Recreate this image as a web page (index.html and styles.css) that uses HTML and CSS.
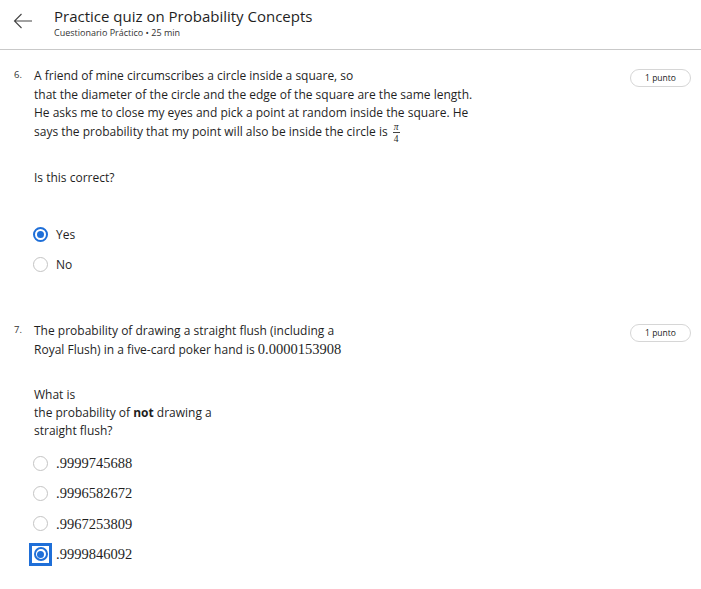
FILE: index.html
```html
<!DOCTYPE html>
<html lang="en">
<head>
<meta charset="utf-8">
<title>Practice quiz on Probability Concepts</title>
<link rel="stylesheet" href="styles.css">
</head>
<body>
<header class="header">
  <button class="back" aria-label="Back">
    <svg width="20" height="16" viewBox="0 0 20 16" fill="none" stroke="#444" stroke-width="1.1">
      <path d="M19 8H1.5M8.5 1L1.5 8l7 7"/>
    </svg>
  </button>
  <div class="titles">
    <h1 class="title">Practice quiz on Probability Concepts</h1>
    <div class="subtitle">Cuestionario Práctico • 25 min</div>
  </div>
</header>

<main class="content">
  <section class="question q6">
    <div class="q-head">
      <span class="q-num">6.</span>
      <div class="q-text">
        <p>A friend of mine circumscribes a circle inside a square, so<br>that the diameter of the circle and the edge of the square are the same length.<br>He asks me to close my eyes and pick a point at random inside the square. He<br>says the probability that my point will also be inside the circle is <span class="frac"><span class="num">π</span><span class="den">4</span></span></p>
        <p class="prompt">Is this correct?</p>
      </div>
      <span class="pill">1 punto</span>
    </div>
    <ul class="options">
      <li class="option"><span class="radio checked"></span><span>Yes</span></li>
      <li class="option"><span class="radio"></span><span>No</span></li>
    </ul>
  </section>

  <section class="question q7">
    <div class="q-head">
      <span class="q-num">7.</span>
      <div class="q-text">
        <p>The probability of drawing a straight flush (including a<br>Royal Flush) in a five-card poker hand is <span class="math">0.0000153908</span></p>
        <p class="prompt2">What is<br>the probability of <strong>not</strong> drawing a<br>straight flush?</p>
      </div>
      <span class="pill">1 punto</span>
    </div>
    <ul class="options">
      <li class="option"><span class="radio"></span><span class="math">.9999745688</span></li>
      <li class="option"><span class="radio"></span><span class="math">.9996582672</span></li>
      <li class="option"><span class="radio"></span><span class="math">.9967253809</span></li>
      <li class="option"><span class="focus"><span class="radio checked"></span></span><span class="math">.9999846092</span></li>
    </ul>
  </section>
</main>
</body>
</html>
```

FILE: styles.css
```css
* { box-sizing: border-box; }
html, body { margin: 0; padding: 0; background: #fff; }
body {
  font-family: "Open Sans", "Noto Sans", sans-serif;
  color: #1f1f1f;
  width: 701px;
}

.header {
  display: flex;
  align-items: flex-start;
  height: 50px;
  border-bottom: 1px solid #c9c9c9;
}
.back {
  border: 0;
  background: none;
  padding: 0;
  margin: 13px 0 0 13px;
  width: 20px;
  height: 16px;
  display: flex;
}
.titles { margin-left: 21px; padding-top: 6px; }
.title {
  margin: 0;
  font-size: 15px;
  font-weight: 400;
  line-height: 20px;
  color: #1f1f1f;
}
.subtitle {
  font-size: 9px;
  line-height: 12px;
  margin-top: 1px;
  color: #333;
}

.content { padding: 0 10px 0 14px; }

.q6 { padding-top: 17px; }
.q7 { padding-top: 42px; }

.q-head { display: flex; align-items: flex-start; }
.q-num {
  width: 20px;
  flex: none;
  font-size: 9.5px;
  line-height: 19px;
  color: #333;
  margin-top: -2px;
}
.q-text { flex: 1; font-size: 12px; line-height: 18.6px; color: #1f1f1f; }
.q-text p { margin: 0; white-space: nowrap; }
.prompt { margin-top: 28px !important; }
.prompt2 { margin-top: 27px !important; line-height: 18px; }

.pill {
  flex: none;
  margin-top: 2px;
  width: 61px;
  height: 18px;
  border: 1px solid #d6d6d6;
  border-radius: 9px;
  font-size: 8.5px;
  line-height: 16px;
  text-align: center;
  color: #222;
}

.math {
  font-family: "Liberation Serif", "Times New Roman", serif;
  font-size: 14.5px;
  line-height: 1;
}
.frac {
  display: inline-flex;
  flex-direction: column;
  align-items: center;
  vertical-align: 6px;
  margin: -10px 0 -10px 2px;
  font-family: "Liberation Serif", serif;
  font-size: 9.5px;
  line-height: 8px;
}
.frac .num { border-bottom: 1px solid #444; padding: 0 1px 1px; font-style: italic; }
.frac .den { padding-top: 2px; }

.options {
  list-style: none;
  margin: 0;
  padding: 0 0 0 19px;
}
.q6 .options { margin-top: 32px; }
.q7 .options { margin-top: 8px; }
.option {
  display: flex;
  align-items: center;
  height: 30px;
  gap: 8px;
  font-size: 12px;
}
.q7 .option { height: 30.3px; }
.radio {
  width: 15px;
  height: 15px;
  border-radius: 50%;
  border: 1.5px solid #c4c4c4;
  background: #fff;
  flex: none;
  position: relative;
}
.radio.checked { border: 2px solid #1f6fd8; }
.radio.checked::after {
  content: "";
  position: absolute;
  left: 50%; top: 50%;
  width: 7px; height: 7px;
  margin: -3.5px 0 0 -3.5px;
  border-radius: 50%;
  background: #1f6fd8;
}
.focus {
  display: flex;
  align-items: center;
  justify-content: center;
  flex: none;
  width: 23px;
  height: 23px;
  margin: 0 -4px;
  border: 3px solid #1f6fd8;
  background: #fff;
}
.focus .radio { width: 14px; height: 14px; }
```
